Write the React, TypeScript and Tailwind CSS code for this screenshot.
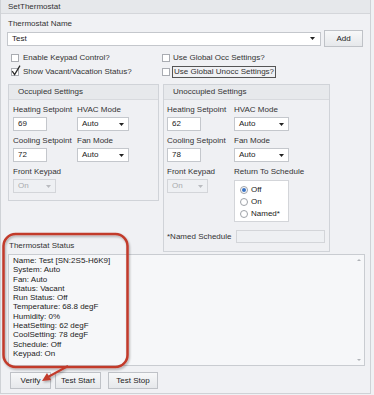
import React from "react";

function Check({ checked }: { checked?: boolean }) {
  return (
    <span className="relative inline-block w-[8px] h-[8px] bg-white border border-[#a9acb2] shrink-0">
      {checked && (
        <svg className="absolute left-[-1px] top-[-4px]" width="10" height="11" viewBox="0 0 10 11">
          <path d="M1.2 6.2 L3.6 9.6 L9 0.6" stroke="#2a2a2a" strokeWidth="1.3" fill="none" />
        </svg>
      )}
    </span>
  );
}

function Arrow({ light }: { light?: boolean }) {
  return (
    <svg width="5" height="3" viewBox="0 0 5 3" className="shrink-0">
      <path d="M0 0 L5 0 L2.5 3 Z" fill={light ? "#b9bbbf" : "#222"} />
    </svg>
  );
}

function Select({ value, className, disabled }: { value: string; className: string; disabled?: boolean }) {
  return (
    <div
      className={
        "flex items-center justify-between h-[14px] border pl-[4px] pr-[4px] " +
        (disabled ? "border-[#d3d5d9] bg-[#eef0f3] text-[#a9abae] " : "border-[#c4c7cc] bg-white text-[#222] ") +
        className
      }
    >
      <span>{value}</span>
      <Arrow light={disabled} />
    </div>
  );
}

function Input({ value, className }: { value: string; className: string }) {
  return (
    <div className={"flex items-center h-[14px] border border-[#c4c7cc] bg-white pl-[4px] text-[#222] " + className}>
      {value}
    </div>
  );
}

function Label({ children }: { children: React.ReactNode }) {
  return <div className="h-[10px] leading-[10px] text-[#333] whitespace-nowrap">{children}</div>;
}

function Radio({ checked, label }: { checked?: boolean; label: string }) {
  return (
    <div className="flex items-center gap-[3px] h-[12px]">
      <span className="relative w-[8px] h-[8px] rounded-full border border-[#9ea2a8] bg-white flex items-center justify-center">
        {checked && <span className="w-[4px] h-[4px] rounded-full bg-[#3a73c4]" />}
      </span>
      <span className="text-[#222]">{label}</span>
    </div>
  );
}

function GroupHeader({ title }: { title: string }) {
  return (
    <div className="h-[15px] bg-[#e7e9ec] border-b border-[#d8dade] pl-[9px] flex items-center text-[#333]">
      {title}
    </div>
  );
}

function Btn({ children, className }: { children: React.ReactNode; className: string }) {
  return (
    <div
      className={
        "h-[17px] flex items-center justify-center border border-[#bfc2c7] bg-gradient-to-b from-[#f7f8f9] to-[#e6e8eb] text-[#222] " +
        className
      }
    >
      {children}
    </div>
  );
}

export default function App() {
  const status = [
    "Name: Test [SN:2S5-H6K9]",
    "System: Auto",
    "Fan: Auto",
    "Status: Vacant",
    "Run Status: Off",
    "Temperature: 68.8 degF",
    "Humidity: 0%",
    "HeatSetting: 62 degF",
    "CoolSetting: 78 degF",
    "Schedule: Off",
    "Keypad: On",
  ];
  return (
    <div
      className="relative w-[374px] h-[395px] bg-[#f0f1f4] overflow-hidden text-[8px] leading-[10px]"
      style={{ fontFamily: '"Liberation Sans", Arial, sans-serif' }}
    >
      <div className="w-[371px] h-[394px] border-l border-r border-b border-[#cfd2d6] flex flex-col">
        {/* title bar */}
        <div className="h-[14px] bg-[#e6e8eb] border-b border-[#d4d6da] pl-[7px] flex items-center text-[#333]">
          SetThermostat
        </div>

        <div className="pl-[6px] flex flex-col">
          <div className="mt-[5px] pl-[1px]">
            <Label>Thermostat Name</Label>
          </div>
          <div className="mt-[1px] flex items-center">
            <div className="w-[314px] h-[14px] border border-[#c4c7cc] bg-white flex items-center justify-between pl-[4px] pr-[5px] text-[#222]">
              <span>Test</span>
              <Arrow />
            </div>
            <Btn className="ml-[3px] w-[39px] h-[15px]">Add</Btn>
          </div>

          {/* checkboxes */}
          <div className="mt-[7px] flex">
            <div className="w-[155px] pl-[4px] flex flex-col gap-[6px]">
              <div className="flex items-center gap-[4px] h-[8px]">
                <Check />
                <span className="text-[#333]">Enable Keypad Control?</span>
              </div>
              <div className="flex items-center gap-[4px] h-[8px]">
                <Check checked />
                <span className="text-[#333]">Show Vacant/Vacation Status?</span>
              </div>
            </div>
            <div className="flex flex-col gap-[6px]">
              <div className="flex items-center gap-[2px] h-[8px]">
                <Check />
                <span className="text-[#333] px-[1px]">Use Global Occ Settings?</span>
              </div>
              <div className="flex items-center gap-[2px] h-[8px]">
                <Check />
                <span className="text-[#333] px-[1px] border border-[#555] leading-[10px]">Use Global Unocc Settings?</span>
              </div>
            </div>
          </div>

          {/* group boxes */}
          <div className="mt-[8px] flex items-start gap-[4px] pl-[1px]">
            {/* Occupied */}
            <div className="w-[151px] border border-[#d0d3d8] bg-[#eff0f3]">
              <GroupHeader title="Occupied Settings" />
              <div className="pl-[4px] pt-[5px] pb-[7px] flex flex-col">
                <div className="flex">
                  <div className="w-[64px] flex flex-col gap-[2px]">
                    <Label>Heating Setpoint</Label>
                    <Input value="69" className="w-[34px]" />
                  </div>
                  <div className="flex flex-col gap-[2px]">
                    <Label>HVAC Mode</Label>
                    <Select value="Auto" className="w-[52px]" />
                  </div>
                </div>
                <div className="flex mt-[5px]">
                  <div className="w-[64px] flex flex-col gap-[2px]">
                    <Label>Cooling Setpoint</Label>
                    <Input value="72" className="w-[34px]" />
                  </div>
                  <div className="flex flex-col gap-[2px]">
                    <Label>Fan Mode</Label>
                    <Select value="Auto" className="w-[52px]" />
                  </div>
                </div>
                <div className="flex flex-col gap-[2px] mt-[5px]">
                  <Label>Front Keypad</Label>
                  <Select value="On" className="w-[43px]" disabled />
                </div>
              </div>
            </div>

            {/* Unoccupied */}
            <div className="w-[167px] border border-[#d0d3d8] bg-[#eff0f3]">
              <GroupHeader title="Unoccupied Settings" />
              <div className="pl-[3px] pt-[5px] pb-[8px] flex flex-col">
                <div className="flex">
                  <div className="w-[67px] flex flex-col gap-[2px]">
                    <Label>Heating Setpoint</Label>
                    <Input value="62" className="w-[34px]" />
                  </div>
                  <div className="flex flex-col gap-[2px]">
                    <Label>HVAC Mode</Label>
                    <Select value="Auto" className="w-[55px]" />
                  </div>
                </div>
                <div className="flex mt-[5px]">
                  <div className="w-[67px] flex flex-col gap-[2px]">
                    <Label>Cooling Setpoint</Label>
                    <Input value="78" className="w-[34px]" />
                  </div>
                  <div className="flex flex-col gap-[2px]">
                    <Label>Fan Mode</Label>
                    <Select value="Auto" className="w-[55px]" />
                  </div>
                </div>
                <div className="flex mt-[5px]">
                  <div className="w-[67px] flex flex-col gap-[2px]">
                    <Label>Front Keypad</Label>
                    <Select value="On" className="w-[41px]" disabled />
                  </div>
                  <div className="flex flex-col gap-[3px]">
                    <Label>Return To Schedule</Label>
                    <div className="w-[55px] h-[42px] border border-[#d3d5d9] bg-white pl-[5px] pt-[3px] flex flex-col">
                      <Radio checked label="Off" />
                      <Radio label="On" />
                      <Radio label="Named*" />
                    </div>
                  </div>
                </div>
                <div className="flex items-center mt-[8px]">
                  <div className="w-[69px] text-[#333]">*Named Schedule</div>
                  <div className="w-[89px] h-[13px] border border-[#d3d5d9] bg-[#eef0f3]" />
                </div>
              </div>
            </div>
          </div>

          {/* status */}
          <div className="mt-[-11px] pl-[2px]">
            <Label>Thermostat Status</Label>
          </div>
          <div className="mt-[3px] ml-[1px] w-[357px] h-[112px] border border-[#c9ccd1] bg-[#f6f7f9] relative pl-[4px] pt-[1px]">
            {status.map((s) => (
              <div key={s} className="h-[9.3px] leading-[9.3px] text-[#222] whitespace-nowrap">
                {s}
              </div>
            ))}
            <div className="absolute right-[3px] top-[4px] w-0 h-0 border-l-[2px] border-r-[2px] border-b-[2px] border-l-transparent border-r-transparent border-b-[#b0b3b8]" />
            <div className="absolute right-[3px] bottom-[4px] w-0 h-0 border-l-[2px] border-r-[2px] border-t-[2px] border-l-transparent border-r-transparent border-t-[#b0b3b8]" />
          </div>

          <div className="mt-[6px] flex pl-[3px]">
            <Btn className="w-[41px]">Verify</Btn>
            <Btn className="ml-[4px] w-[46px]">Test Start</Btn>
            <Btn className="ml-[7px] w-[50px]">Test Stop</Btn>
          </div>
        </div>
      </div>

      {/* red annotation overlay */}
      <svg className="absolute left-0 top-0 pointer-events-none" width="374" height="395" viewBox="0 0 374 395">
        <defs>
          <filter id="sh" x="-10%" y="-10%" width="120%" height="120%">
            <feDropShadow dx="1" dy="1.5" stdDeviation="1" floodColor="#000" floodOpacity="0.3" />
          </filter>
        </defs>
        <g filter="url(#sh)">
          <rect x="3.5" y="234" width="124" height="133" rx="12" ry="12" fill="none" stroke="#c23a2c" strokeWidth="2.5" />
          <line x1="68" y1="366" x2="48" y2="377" stroke="#c23a2c" strokeWidth="2" />
          <path d="M42 381 L47 373 L51 380 Z" fill="#c23a2c" />
        </g>
      </svg>
    </div>
  );
}
